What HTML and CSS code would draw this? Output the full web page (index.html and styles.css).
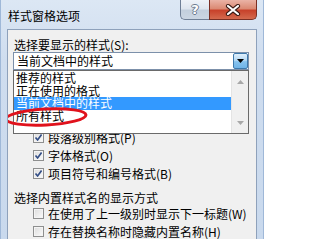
FILE: index.html
```html
<!DOCTYPE html>
<html lang="zh-CN">
<head>
<meta charset="utf-8">
<title>样式窗格选项</title>
<link rel="stylesheet" href="styles.css">
</head>
<body>
<div class="window">
  <div class="titlebar">
    <span class="title">样式窗格选项</span>
    <div class="caption">
      <div class="cbtn help">?</div>
      <div class="cbtn close">
        <svg width="16" height="12" viewBox="0 0 16 12">
          <path d="M3 2 L13 10 M13 2 L3 10" stroke="#3a1a14" stroke-width="4.2" stroke-linecap="round"/>
          <path d="M3 2 L13 10 M13 2 L3 10" stroke="#ffffff" stroke-width="2.2" stroke-linecap="round"/>
        </svg>
      </div>
    </div>
  </div>
  <div class="panel">
    <div class="label">选择要显示的样式(S):</div>
    <div class="combo-wrap">
      <div class="combo">
        <span class="combo-text">当前文档中的样式</span>
        <span class="drop">
          <svg width="7" height="4" viewBox="0 0 7 4"><path d="M0 0 H7 L3.5 4 Z" fill="#000"/></svg>
        </span>
      </div>
      <div class="listbox">
        <div class="items">
          <div class="item">推荐的样式</div>
          <div class="item">正在使用的格式</div>
          <div class="item selected">当前文档中的样式</div>
          <div class="item">所有样式</div>
        </div>
        <div class="scrollbar">
          <svg class="arrow" width="7" height="4" viewBox="0 0 7 4"><path d="M0 4 H7 L3.5 0 Z" fill="#a8a8a8"/></svg>
          <svg class="arrow" width="7" height="4" viewBox="0 0 7 4"><path d="M0 0 H7 L3.5 4 Z" fill="#a8a8a8"/></svg>
        </div>
      </div>
      <svg class="mark" width="86" height="22" viewBox="0 0 86 22">
        <ellipse cx="43" cy="11" rx="40" ry="8" fill="none" stroke="#e0121c" stroke-width="3" transform="rotate(-3 43 11)"/>
      </svg>
    </div>
    <div class="checks first">
      <div class="check"><span class="box on"></span><span>段落级别格式(P)</span></div>
      <div class="check"><span class="box on"></span><span>字体格式(O)</span></div>
      <div class="check"><span class="box on"></span><span>项目符号和编号格式(B)</span></div>
    </div>
    <div class="label section">选择内置样式名的显示方式</div>
    <div class="checks">
      <div class="check"><span class="box"></span><span>在使用了上一级别时显示下一标题(W)</span></div>
      <div class="check"><span class="box"></span><span>存在替换名称时隐藏内置名称(H)</span></div>
    </div>
  </div>
</div>
</body>
</html>
```
FILE: styles.css
```css
html, body {
  margin: 0;
  padding: 0;
}
body {
  width: 264px;
  height: 239px;
  overflow: hidden;
  font-family: "Noto Sans CJK SC", "Noto Sans", sans-serif;
  font-size: 12px;
  color: #000;
}
.window {
  height: 239px;
  box-sizing: border-box;
  border-left: 1px solid #9fb8d8;
  border-right: 1px solid #9fb8d8;
  background: linear-gradient(#dce7f4, #cfddef 60px, #c9d9ed);
  display: flex;
  flex-direction: column;
}
.titlebar {
  height: 29px;
  flex: none;
  display: flex;
  align-items: flex-start;
}
.title {
  padding: 8px 0 0 7px;
  line-height: 16px;
}
.caption {
  margin-left: auto;
  margin-right: 6px;
  display: flex;
}
.cbtn {
  height: 20px;
  box-sizing: border-box;
  display: flex;
  align-items: center;
  justify-content: center;
  border: 1px solid #6f7f96;
  border-top: none;
}
.help {
  width: 29px;
  border-right: none;
  border-radius: 0 0 0 5px;
  background: linear-gradient(#eef2f8, #dfe6ef 45%, #c3cfdd 55%, #cbd6e3);
  color: #fff;
  font-family: "DejaVu Sans", sans-serif;
  font-weight: bold;
  font-size: 13px;
  text-shadow: -1px 0 #6c7a8e, 1px 0 #6c7a8e, 0 -1px #6c7a8e, 0 1px #6c7a8e;
}
.close {
  width: 48px;
  border-color: #7a2f24;
  border-radius: 0 0 5px 0;
  background: linear-gradient(#eab3a6, #db8a74 45%, #c8422b 55%, #d46a4e);
}
.panel {
  flex: 1;
  margin: 0 6px;
  border: 1px solid #8ea1bb;
  border-bottom: none;
  background: #f0f0f0;
  padding-left: 5px;
  overflow: hidden;
}
.label {
  margin-top: 7px;
  padding-left: 1px;
  line-height: 15px;
}
.combo-wrap {
  position: relative;
  width: 236px;
}
.combo {
  height: 18px;
  box-sizing: border-box;
  border: 1px solid #7c90aa;
  background: #fff;
  display: flex;
  align-items: flex-start;
}
.combo-text {
  padding-left: 3px;
  line-height: 16px;
}
.drop {
  margin-left: auto;
  width: 15px;
  height: 16px;
  box-sizing: border-box;
  border: 1px solid #3e79ac;
  border-radius: 2px;
  background: linear-gradient(#e0effb, #b6daf5 45%, #86c2ee 55%, #6fb4e8);
  display: flex;
  align-items: center;
  justify-content: center;
}
.listbox {
  position: absolute;
  top: 18px;
  left: 0;
  width: 236px;
  height: 64px;
  box-sizing: border-box;
  border: 1px solid #6a6a6a;
  background: #fff;
  display: flex;
}
.items {
  flex: 1;
  padding-top: 1px;
}
.item {
  height: 12.5px;
  line-height: 12.5px;
  padding-left: 2px;
  white-space: nowrap;
}
.item.selected {
  background: #3399ff;
  color: #fff;
}
.scrollbar {
  width: 16px;
  background: #f0f0f0;
  border-left: 1px solid #e4e4e4;
  display: flex;
  flex-direction: column;
  align-items: center;
  justify-content: space-between;
  padding: 9px 0 8px;
}
.mark {
  position: absolute;
  left: -10px;
  top: 54px;
}
.checks.first {
  margin-top: 58.5px;
}
.check {
  height: 18px;
  display: flex;
  align-items: center;
  gap: 4px;
  white-space: nowrap;
}
.box {
  margin-left: 20px;
  width: 11px;
  height: 11px;
  box-sizing: border-box;
  border: 1px solid #8e8f8f;
  background: linear-gradient(135deg, #dcdcdc, #fbfbfb);
  box-shadow: inset 0 0 0 1px #f4f4f4;
  flex: none;
}
.box.on {
  background:
    url("data:image/svg+xml;utf8,<svg xmlns='http://www.w3.org/2000/svg' width='9' height='9' viewBox='0 0 9 9'><path d='M1.5 4.5 L3.6 7 L7.6 1.6' fill='none' stroke='%23334e86' stroke-width='1.7'/></svg>") center/9px 9px no-repeat,
    linear-gradient(135deg, #dcdcdc, #fbfbfb);
}
.label.section {
  margin-top: 8px;
  line-height: 14px;
}
```
